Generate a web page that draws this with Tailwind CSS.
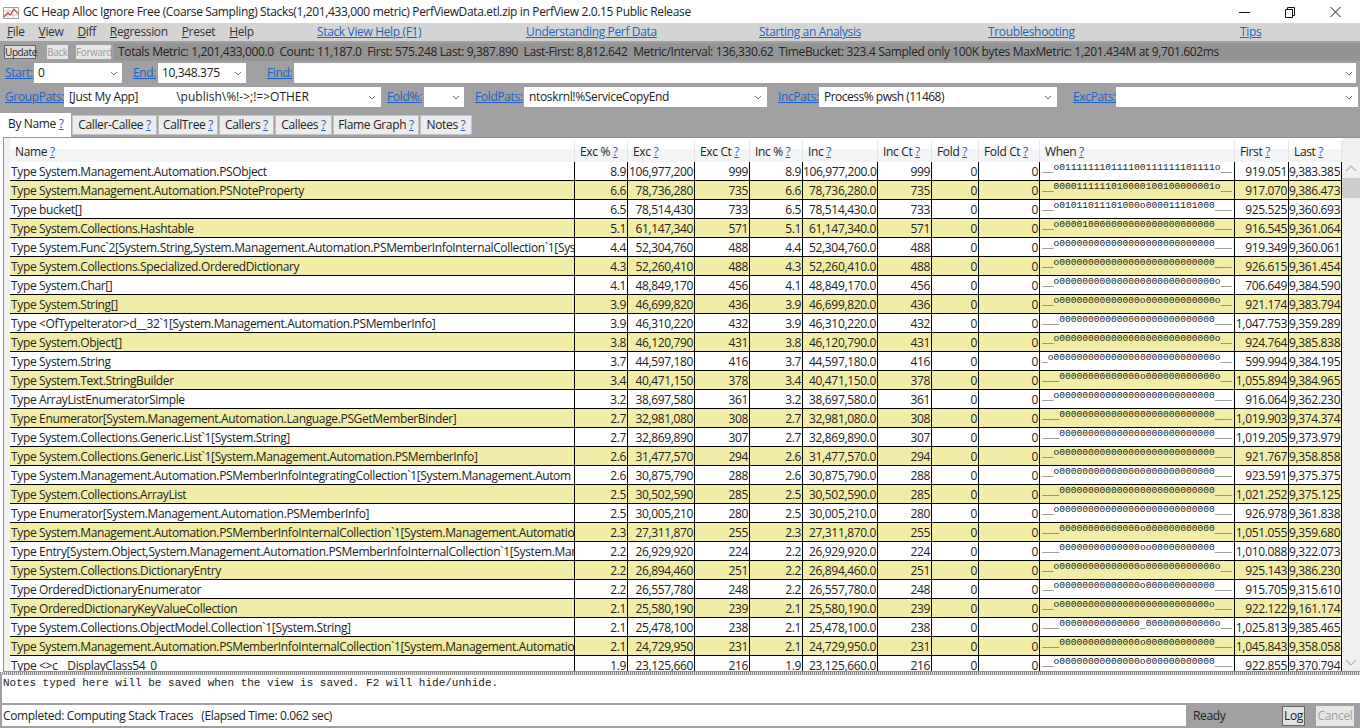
<!DOCTYPE html>
<html>
<head>
<meta charset="utf-8">
<script src="https://cdn.jsdelivr.net/npm/@tailwindcss/browser@4"></script>
<title>PerfView</title>
</head>
<body class="bg-white">
<div class="w-[1360px] h-[728px] overflow-hidden flex flex-col font-['Open_Sans',sans-serif] text-[12px] tracking-[-0.35px] text-[#222] bg-[#a09fa1]">

  <!-- title bar -->
  <div class="h-[23px] shrink-0 bg-white flex items-center pl-[3px] pr-[1px]">
    <svg class="w-[16px] h-[16px] mr-[4px]" viewBox="0 0 16 16" fill="none"><path d="M.5 3.5h15v11H.5z" stroke="#9a9a9a"/><path d="M.5 7h15M.5 11h15M5 3.5v11M10 3.5v11" stroke="#c8c8c8"/><path d="M1 13l3.500-4 3 2 3.500-6 4 5" stroke="#c9433b" stroke-width="1.200"/></svg>
    <span class="flex-1">GC Heap Alloc Ignore Free (Coarse Sampling) Stacks(1,201,433,000 metric) PerfViewData.etl.zip in PerfView 2.0.15 Public Release</span>
    <div class="flex items-center">
      <svg class="w-[46px] h-[20px]" viewBox="0 0 46 20" fill="none"><path d="M18 10.500h11" stroke="#111"/></svg>
      <svg class="w-[46px] h-[20px]" viewBox="0 0 46 20" fill="none"><path d="M18.500 7.500h7v8h-7zM20.500 7.500v-2h7v8h-2" stroke="#111"/></svg>
      <svg class="w-[46px] h-[20px]" viewBox="0 0 46 20" fill="none"><path d="M17.500 5l10 10M27.500 5l-10 10" stroke="#111"/></svg>
    </div>
  </div>

  <!-- menu -->
  <div class="h-[18px] shrink-0 bg-[#d4d4d4] flex items-center relative">
    <div class="flex gap-[14px] pl-[7px] w-[317px] text-[#333]">
      <span><u>F</u>ile</span><span><u>V</u>iew</span><span><u>D</u>iff</span><span><u>R</u>egression</span><span><u>P</u>reset</span><span><u>H</u>elp</span>
    </div>
    <a class="text-[#1c64c4] underline w-[209px]">Stack View Help (F1)</a>
    <a class="text-[#1c64c4] underline w-[233px]">Understanding Perf Data</a>
    <a class="text-[#1c64c4] underline w-[229px]">Starting an Analysis</a>
    <a class="text-[#1c64c4] underline w-[252px]">Troubleshooting</a>
    <a class="text-[#1c64c4] underline">Tips</a>
  </div>

  <!-- totals -->
  <div class="h-[22px] shrink-0 flex items-center pl-[4px] gap-[11px]">
    <button class="w-[32px] h-[14px] bg-[#dcdcdc] border border-[#666] text-[10px] leading-[12px] tracking-[-0.4px] text-center">Update</button>
    <button class="w-[21px] h-[14px] bg-[#e6e6e6] text-[#9a9a9a] text-[10px] leading-[12px] tracking-[-0.4px] text-center -mr-[3px]">Back</button>
    <button class="w-[35px] h-[14px] bg-[#e6e6e6] text-[#9a9a9a] text-[10px] leading-[12px] tracking-[-0.4px] text-center -mr-[8px]">Forward</button>
    <div class="flex-1 h-[18px] bg-[#959495] flex items-center pl-[4px] whitespace-pre">Totals Metric: 1,201,433,000.0  Count: 11,187.0  First: 575.248 Last: 9,387.890  Last-First: 8,812.642  Metric/Interval: 136,330.62  TimeBucket: 323.4 Sampled only 100K bytes MaxMetric: 1,201.434M at 9,701.602ms</div>
  </div>

  <!-- start / end / find -->
  <div class="h-[20px] shrink-0 flex items-center">
    <a class="text-[#1c64c4] underline ml-[5px] w-[29px]">Start:</a>
    <div class="w-[88px] h-[20px] bg-white flex items-center justify-between pl-[4px] pr-[4px]"><span>0</span><svg class="w-[8px] h-[5px]" viewBox="0 0 8 5" fill="none"><path d="M1 1l3 3 3-3" stroke="#777"/></svg></div>
    <a class="text-[#1c64c4] underline ml-[11px] w-[25px]">End:</a>
    <div class="w-[88px] h-[20px] bg-white flex items-center justify-between pl-[4px] pr-[4px]"><span>10,348.375</span><svg class="w-[8px] h-[5px]" viewBox="0 0 8 5" fill="none"><path d="M1 1l3 3 3-3" stroke="#777"/></svg></div>
    <a class="text-[#1c64c4] underline ml-[21px] w-[27px]">Find:</a>
    <div class="w-[1062px] h-[20px] bg-white flex items-center justify-end pr-[3px]"><svg class="w-[8px] h-[5px]" viewBox="0 0 8 5" fill="none"><path d="M1 1l3 3 3-3" stroke="#777"/></svg></div>
  </div>

  <div class="h-[4px] shrink-0"></div>

  <!-- patterns -->
  <div class="h-[20px] shrink-0 flex items-center">
    <a class="text-[#1c64c4] underline ml-[5px] w-[59px]">GroupPats:</a>
    <div class="w-[317px] h-[20px] bg-white flex items-center pl-[5px] pr-[5px]"><span>[Just My App]</span><span class="ml-[38px] tracking-normal flex-1">\publish\%!-&gt;;!=&gt;OTHER</span><svg class="w-[8px] h-[5px]" viewBox="0 0 8 5" fill="none"><path d="M1 1l3 3 3-3" stroke="#777"/></svg></div>
    <a class="text-[#1c64c4] underline ml-[6px] w-[37px]">Fold%:</a>
    <div class="w-[40px] h-[20px] bg-white flex items-center justify-end pr-[4px]"><svg class="w-[8px] h-[5px]" viewBox="0 0 8 5" fill="none"><path d="M1 1l3 3 3-3" stroke="#777"/></svg></div>
    <a class="text-[#1c64c4] underline ml-[11px] w-[49px]">FoldPats:</a>
    <div class="w-[243px] h-[20px] bg-white flex items-center justify-between pl-[5px] pr-[5px]"><span>ntoskrnl!%ServiceCopyEnd</span><svg class="w-[8px] h-[5px]" viewBox="0 0 8 5" fill="none"><path d="M1 1l3 3 3-3" stroke="#777"/></svg></div>
    <a class="text-[#1c64c4] underline ml-[11px] w-[41px]">IncPats:</a>
    <div class="w-[238px] h-[20px] bg-white flex items-center justify-between pl-[5px] pr-[5px]"><span class="tracking-[-0.5px]">Process% pwsh (11468)</span><svg class="w-[8px] h-[5px]" viewBox="0 0 8 5" fill="none"><path d="M1 1l3 3 3-3" stroke="#777"/></svg></div>
    <a class="text-[#1c64c4] underline ml-[16px] w-[43px]">ExcPats:</a>
    <div class="w-[242px] h-[20px] bg-white flex items-center justify-end pr-[5px]"><svg class="w-[8px] h-[5px]" viewBox="0 0 8 5" fill="none"><path d="M1 1l3 3 3-3" stroke="#777"/></svg></div>
  </div>

  <!-- tabs -->
  <div class="h-[30px] shrink-0 flex items-end [&_u]:text-[#1c64c4]">
    <div class="w-[71px] h-[24px] bg-white pl-[8px] pt-[2px] whitespace-pre">By Name <u>?</u></div>
    <div class="flex gap-[1px] ml-[1px] h-[22px] mb-[2px] bg-[#a09fa1] [&>div]:h-[20px] [&>div]:mt-[2px] [&>div]:bg-[#ececec] [&>div]:text-center [&>div]:whitespace-pre [&>div]:border [&>div]:border-[#c4c4c4]">
      <div class="w-[85px]">Caller-Callee <u>?</u></div>
      <div class="w-[60px]">CallTree <u>?</u></div>
      <div class="w-[55px]">Callers <u>?</u></div>
      <div class="w-[57px]">Callees <u>?</u></div>
      <div class="w-[86px]">Flame Graph <u>?</u></div>
      <div class="w-[52px]">Notes <u>?</u></div>
    </div>
  </div>

  <!-- grid -->
  <div class="h-[535px] shrink-0 bg-white flex pl-[3px]">
    <div class="flex-1 border-t border-l border-b border-[#7f98a8] flex min-w-0">
      <div class="w-[6px] shrink-0 bg-[#f2f2f2]"></div>
      <div class="w-[1332px] shrink-0 h-full overflow-hidden pt-[3px]">
        <table class="table-fixed w-[1332px] border-separate border-spacing-0 whitespace-nowrap
          [&_th]:h-[21px] [&_th]:p-0 [&_th]:pl-[5px] [&_th]:font-normal [&_th]:text-left [&_th]:border-r [&_th]:border-[#e4e4e4] [&_th]:bg-linear-to-b [&_th]:from-white [&_th]:from-40% [&_th]:to-[#f3f4f5] [&_th]:to-40% [&_th_u]:text-[#1c64c4]
          [&_td]:h-[19px] [&_td]:leading-[16px] [&_td]:p-0 [&_td]:pt-[1px] [&_td]:pr-[1px] [&_td]:text-right [&_td]:overflow-hidden [&_td]:border-r [&_td]:border-b [&_td]:border-black
          [&_td:first-child]:text-left [&_td:first-child]:pl-[1px]
          [&_tbody_tr:nth-child(even)]:bg-[#f2eda6]
          [&_td:nth-child(10)]:font-['Liberation_Mono',monospace] [&_td:nth-child(10)]:text-[9.600px] [&_td:nth-child(10)]:leading-[12px] [&_td:nth-child(10)]:align-top [&_td:nth-child(10)]:pt-[2px] [&_td:nth-child(10)]:tracking-normal [&_td:nth-child(10)]:text-left [&_td:nth-child(10)]:pl-[2px] [&_td_span]:relative [&_td_span]:-top-[2px]">
          <colgroup><col class="w-[565px]"><col class="w-[53px]"><col class="w-[67px]"><col class="w-[55px]"><col class="w-[53px]"><col class="w-[75px]"><col class="w-[54px]"><col class="w-[47px]"><col class="w-[61px]"><col class="w-[195px]"><col class="w-[54px]"><col class="w-[53px]"></colgroup>
          <thead><tr><th>Name <u>?</u></th><th>Exc % <u>?</u></th><th>Exc <u>?</u></th><th>Exc Ct <u>?</u></th><th>Inc % <u>?</u></th><th>Inc <u>?</u></th><th>Inc Ct <u>?</u></th><th>Fold <u>?</u></th><th>Fold Ct <u>?</u></th><th>When <u>?</u></th><th>First <u>?</u></th><th>Last <u>?</u></th></tr></thead>
          <tbody>
            <tr><td>Type System.Management.Automation.PSObject</td><td>8.9</td><td>106,977,200</td><td>999</td><td>8.9</td><td>106,977,200.0</td><td>999</td><td>0</td><td>0</td><td>__<span>o011111110111100111111101111o</span>__</td><td>919.051</td><td>9,383.385</td></tr>
            <tr><td>Type System.Management.Automation.PSNoteProperty</td><td>6.6</td><td>78,736,280</td><td>735</td><td>6.6</td><td>78,736,280.0</td><td>735</td><td>0</td><td>0</td><td>__<span>0000111111010000100100000001o</span>__</td><td>917.070</td><td>9,386.473</td></tr>
            <tr><td>Type bucket[]</td><td>6.5</td><td>78,514,430</td><td>733</td><td>6.5</td><td>78,514,430.0</td><td>733</td><td>0</td><td>0</td><td>__<span>o01011011101000o000011101000</span>___</td><td>925.525</td><td>9,360.693</td></tr>
            <tr><td>Type System.Collections.Hashtable</td><td>5.1</td><td>61,147,340</td><td>571</td><td>5.1</td><td>61,147,340.0</td><td>571</td><td>0</td><td>0</td><td>__<span>o000010000000000000000000000</span>___</td><td>916.545</td><td>9,361.064</td></tr>
            <tr><td>Type System.Func`2[System.String,System.Management.Automation.PSMemberInfoInternalCollection`1[Sys</td><td>4.4</td><td>52,304,760</td><td>488</td><td>4.4</td><td>52,304,760.0</td><td>488</td><td>0</td><td>0</td><td>__<span>o000000000000000000000000000</span>___</td><td>919.349</td><td>9,360.061</td></tr>
            <tr><td>Type System.Collections.Specialized.OrderedDictionary</td><td>4.3</td><td>52,260,410</td><td>488</td><td>4.3</td><td>52,260,410.0</td><td>488</td><td>0</td><td>0</td><td>__<span>o000000000000000000000000000</span>___</td><td>926.615</td><td>9,361.454</td></tr>
            <tr><td>Type System.Char[]</td><td>4.1</td><td>48,849,170</td><td>456</td><td>4.1</td><td>48,849,170.0</td><td>456</td><td>0</td><td>0</td><td>__<span>o000000000000000000000000000o</span>__</td><td>706.649</td><td>9,384.590</td></tr>
            <tr><td>Type System.String[]</td><td>3.9</td><td>46,699,820</td><td>436</td><td>3.9</td><td>46,699,820.0</td><td>436</td><td>0</td><td>0</td><td>__<span>o00000000000000o000000000000o</span>__</td><td>921.174</td><td>9,383.794</td></tr>
            <tr><td>Type &lt;OfTypeIterator&gt;d__32`1[System.Management.Automation.PSMemberInfo]</td><td>3.9</td><td>46,310,220</td><td>432</td><td>3.9</td><td>46,310,220.0</td><td>432</td><td>0</td><td>0</td><td>___<span>000000000000000000000000000</span>___</td><td>1,047.753</td><td>9,359.289</td></tr>
            <tr><td>Type System.Object[]</td><td>3.8</td><td>46,120,790</td><td>431</td><td>3.8</td><td>46,120,790.0</td><td>431</td><td>0</td><td>0</td><td>__<span>o000000000000000000000000000o</span>__</td><td>924.764</td><td>9,385.838</td></tr>
            <tr><td>Type System.String</td><td>3.7</td><td>44,597,180</td><td>416</td><td>3.7</td><td>44,597,180.0</td><td>416</td><td>0</td><td>0</td><td>_<span>o0000000000000000000000000000o</span>__</td><td>599.994</td><td>9,384.195</td></tr>
            <tr><td>Type System.Text.StringBuilder</td><td>3.4</td><td>40,471,150</td><td>378</td><td>3.4</td><td>40,471,150.0</td><td>378</td><td>0</td><td>0</td><td>___<span>00000000000000o000000000000o</span>__</td><td>1,055.894</td><td>9,384.965</td></tr>
            <tr><td>Type ArrayListEnumeratorSimple</td><td>3.2</td><td>38,697,580</td><td>361</td><td>3.2</td><td>38,697,580.0</td><td>361</td><td>0</td><td>0</td><td>__<span>o000000000000000000000000000</span>___</td><td>916.064</td><td>9,362.230</td></tr>
            <tr><td>Type Enumerator[System.Management.Automation.Language.PSGetMemberBinder]</td><td>2.7</td><td>32,981,080</td><td>308</td><td>2.7</td><td>32,981,080.0</td><td>308</td><td>0</td><td>0</td><td>___<span>000000000000000000000000000</span>___</td><td>1,019.903</td><td>9,374.374</td></tr>
            <tr><td>Type System.Collections.Generic.List`1[System.String]</td><td>2.7</td><td>32,869,890</td><td>307</td><td>2.7</td><td>32,869,890.0</td><td>307</td><td>0</td><td>0</td><td>___<span>000000000000000000000000000</span>___</td><td>1,019.205</td><td>9,373.979</td></tr>
            <tr><td>Type System.Collections.Generic.List`1[System.Management.Automation.PSMemberInfo]</td><td>2.6</td><td>31,477,570</td><td>294</td><td>2.6</td><td>31,477,570.0</td><td>294</td><td>0</td><td>0</td><td>__<span>o000000000000000000000000000</span>___</td><td>921.767</td><td>9,358.858</td></tr>
            <tr><td>Type System.Management.Automation.PSMemberInfoIntegratingCollection`1[System.Management.Autom</td><td>2.6</td><td>30,875,790</td><td>288</td><td>2.6</td><td>30,875,790.0</td><td>288</td><td>0</td><td>0</td><td>__<span>o000000000000000000000000000</span>___</td><td>923.591</td><td>9,375.375</td></tr>
            <tr><td>Type System.Collections.ArrayList</td><td>2.5</td><td>30,502,590</td><td>285</td><td>2.5</td><td>30,502,590.0</td><td>285</td><td>0</td><td>0</td><td>___<span>000000000000000000000000000</span>___</td><td>1,021.252</td><td>9,375.125</td></tr>
            <tr><td>Type Enumerator[System.Management.Automation.PSMemberInfo]</td><td>2.5</td><td>30,005,210</td><td>280</td><td>2.5</td><td>30,005,210.0</td><td>280</td><td>0</td><td>0</td><td>__<span>o000000000000000000000000000</span>___</td><td>926.978</td><td>9,361.838</td></tr>
            <tr><td>Type System.Management.Automation.PSMemberInfoInternalCollection`1[System.Management.Automatio</td><td>2.3</td><td>27,311,870</td><td>255</td><td>2.3</td><td>27,311,870.0</td><td>255</td><td>0</td><td>0</td><td>___<span>00000000000000o000000000000</span>___</td><td>1,051.055</td><td>9,359.680</td></tr>
            <tr><td>Type Entry[System.Object,System.Management.Automation.PSMemberInfoInternalCollection`1[System.Mar</td><td>2.2</td><td>26,929,920</td><td>224</td><td>2.2</td><td>26,929,920.0</td><td>224</td><td>0</td><td>0</td><td>___<span>00000000000000oo00000000000</span>___</td><td>1,010.088</td><td>9,322.073</td></tr>
            <tr><td>Type System.Collections.DictionaryEntry</td><td>2.2</td><td>26,894,460</td><td>251</td><td>2.2</td><td>26,894,460.0</td><td>251</td><td>0</td><td>0</td><td>__<span>o00000000000000o000000000000o</span>__</td><td>925.143</td><td>9,386.230</td></tr>
            <tr><td>Type OrderedDictionaryEnumerator</td><td>2.2</td><td>26,557,780</td><td>248</td><td>2.2</td><td>26,557,780.0</td><td>248</td><td>0</td><td>0</td><td>__<span>o00000000000000o000000000000</span>___</td><td>915.705</td><td>9,315.610</td></tr>
            <tr><td>Type OrderedDictionaryKeyValueCollection</td><td>2.1</td><td>25,580,190</td><td>239</td><td>2.1</td><td>25,580,190.0</td><td>239</td><td>0</td><td>0</td><td>__<span>o00000000000000000000000000o</span>___</td><td>922.122</td><td>9,161.174</td></tr>
            <tr><td>Type System.Collections.ObjectModel.Collection`1[System.String]</td><td>2.1</td><td>25,478,100</td><td>238</td><td>2.1</td><td>25,478,100.0</td><td>238</td><td>0</td><td>0</td><td>___<span>00000000000000</span>_<span>000000000000o</span>__</td><td>1,025.813</td><td>9,385.465</td></tr>
            <tr><td>Type System.Management.Automation.PSMemberInfoInternalCollection`1[System.Management.Automatio</td><td>2.1</td><td>24,729,950</td><td>231</td><td>2.1</td><td>24,729,950.0</td><td>231</td><td>0</td><td>0</td><td>___<span>00000000000000o000000000000</span>___</td><td>1,045.843</td><td>9,358.058</td></tr>
            <tr><td>Type &lt;&gt;c__DisplayClass54_0</td><td>1.9</td><td>23,125,660</td><td>216</td><td>1.9</td><td>23,125,660.0</td><td>216</td><td>0</td><td>0</td><td>__<span>o00000000000000o000000000000</span>___</td><td>922.855</td><td>9,370.794</td></tr>
          </tbody>
        </table>
      </div>
      <!-- scrollbar -->
      <div class="flex-1 bg-[#f0f0f0] flex flex-col pt-[22px]">
        <svg class="w-[18px] h-[18px] shrink-0" viewBox="0 0 18 18" fill="none"><path d="M4 11l5-5 5 5" stroke="#b0b0b0" stroke-width="1.200"/></svg>
        <div class="h-[20px] w-[18px] shrink-0 bg-[#cdcdcd]"></div>
        <div class="flex-1"></div>
        <svg class="w-[18px] h-[18px] shrink-0" viewBox="0 0 18 18" fill="none"><path d="M4 7l5 5 5-5" stroke="#b0b0b0" stroke-width="1.200"/></svg>
      </div>
    </div>
  </div>

  <!-- splitter -->
  <div class="h-[3px] shrink-0 bg-[repeating-linear-gradient(90deg,#8a8a8a_0,#8a8a8a_1px,#e0e0e0_1px,#e0e0e0_2px)]"></div>

  <!-- notes -->
  <div class="h-[28px] shrink-0 bg-white border-l-[2px] border-[#a0a0a0] pl-[1px] font-['Liberation_Mono',monospace] text-[11px] tracking-normal leading-[14px] pt-[1px]">Notes typed here will be saved when the view is saved. F2 will hide/unhide.</div>

  <div class="h-[2px] shrink-0"></div>

  <!-- status -->
  <div class="h-[22px] shrink-0 flex items-center">
    <div class="w-[1186px] h-[21px] self-start bg-white border-l-[2px] border-[#a0a0a0] pl-[1px] flex items-center whitespace-pre">Completed: Computing Stack Traces   (Elapsed Time: 0.062 sec)</div>
    <span class="ml-[7px] w-[89px]">Ready</span>
    <button class="w-[23px] h-[20px] bg-[#e1e1e1] border border-[#666] text-center">Log</button>
    <button class="ml-[11px] w-[38px] h-[20px] bg-[#e6e6e6] text-[#a0a0a0] text-center">Cancel</button>
  </div>
</div>
</body>
</html>
